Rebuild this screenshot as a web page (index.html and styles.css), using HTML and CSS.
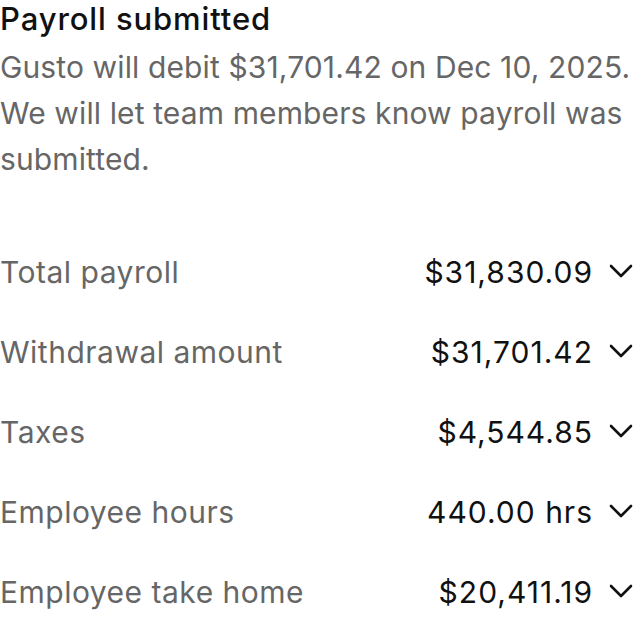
FILE: index.html
```html
<!DOCTYPE html>
<html lang="en">
<head>
<meta charset="utf-8">
<title>Payroll submitted</title>
<link rel="stylesheet" href="styles.css">
</head>
<body>
<main class="panel">
  <h1 class="title">Payroll submitted</h1>
  <p class="desc">Gusto will debit $31,701.42 on Dec 10, 2025. We will let team members know payroll was submitted.</p>
  <ul class="rows">
    <li class="row"><span class="label">Total payroll</span><span class="value">$31,830.09<svg class="chev" viewBox="0 0 24 14"><path d="M2 2 L12 12 L22 2"/></svg></span></li>
    <li class="row"><span class="label">Withdrawal amount</span><span class="value">$31,701.42<svg class="chev" viewBox="0 0 24 14"><path d="M2 2 L12 12 L22 2"/></svg></span></li>
    <li class="row"><span class="label">Taxes</span><span class="value">$4,544.85<svg class="chev" viewBox="0 0 24 14"><path d="M2 2 L12 12 L22 2"/></svg></span></li>
    <li class="row"><span class="label">Employee hours</span><span class="value">440.00 hrs<svg class="chev" viewBox="0 0 24 14"><path d="M2 2 L12 12 L22 2"/></svg></span></li>
    <li class="row"><span class="label">Employee take home</span><span class="value">$20,411.19<svg class="chev" viewBox="0 0 24 14"><path d="M2 2 L12 12 L22 2"/></svg></span></li>
  </ul>
</main>
</body>
</html>
```
FILE: styles.css
```css
html, body {
  margin: 0;
  padding: 0;
  background: #ffffff;
}
body {
  font-family: Inter, "Noto Sans", "Liberation Sans", sans-serif;
  color: #111111;
}
.panel {
  width: 637px;
}
.title {
  margin: 0;
  font-size: 31px;
  font-weight: 500;
  line-height: 38px;
  letter-spacing: 0.9px;
  color: #111111;
}
.desc {
  margin: 6px 0 0;
  font-size: 30px;
  line-height: 46px;
  letter-spacing: 0.12px;
  color: #666666;
}
.rows {
  list-style: none;
  margin: 50px 0 0;
  padding: 0;
}
.row {
  display: flex;
  justify-content: space-between;
  align-items: center;
  height: 80px;
  font-size: 30px;
}
.label {
  color: #666666;
  letter-spacing: 0.5px;
}
.value {
  display: flex;
  align-items: center;
  gap: 16px;
  color: #111111;
  letter-spacing: 1px;
}
.chev {
  width: 24px;
  height: 14px;
  margin-right: 4px;
  margin-top: -3px;
  fill: none;
  stroke: #111111;
  stroke-width: 2.6;
  stroke-linecap: round;
  stroke-linejoin: round;
}
```
